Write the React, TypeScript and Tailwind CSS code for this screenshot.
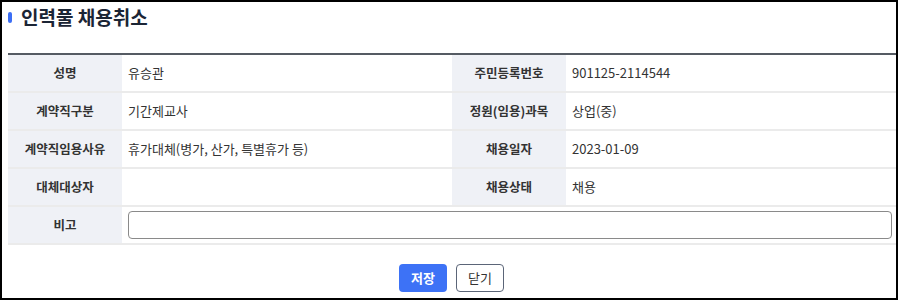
import React from "react";

const rows: { l1: string; v1: string; l2: string; v2: string }[] = [
  { l1: "성명", v1: "유승관", l2: "주민등록번호", v2: "901125-2114544" },
  { l1: "계약직구분", v1: "기간제교사", l2: "정원(임용)과목", v2: "상업(중)" },
  { l1: "계약직임용사유", v1: "휴가대체(병가, 산가, 특별휴가 등)", l2: "채용일자", v2: "2023-01-09" },
  { l1: "대체대상자", v1: "", l2: "채용상태", v2: "채용" },
];

function Label({ children }: { children: React.ReactNode }) {
  return (
    <div className="w-[114px] shrink-0 bg-[#eff1f6] flex items-center justify-center text-[12.5px] font-bold text-[#333]">
      {children}
    </div>
  );
}

function Value({ children }: { children: React.ReactNode }) {
  return (
    <div className="flex-1 flex items-center pl-[6px] text-[13px] text-[#333]">
      {children}
    </div>
  );
}

export default function App() {
  return (
    <div
      className="w-[898px] h-[300px] border-2 border-black bg-white flex flex-col"
      style={{ fontFamily: '"Noto Sans CJK KR", "Noto Sans", sans-serif' }}
    >
      <div className="h-[51px] flex items-start pl-[6px]">
        <div className="flex items-center gap-[9px] h-[30px]">
          <span className="w-[4px] h-[11px] rounded-full bg-[#3b6ef5]" />
          <h1 className="text-[19px] font-bold text-[#1b2535] leading-[28px]">인력풀 채용취소</h1>
        </div>
      </div>

      <div className="ml-[6px] border-t-2 border-[#555b63]">
        {rows.map((r, i) => (
          <div key={i} className="flex h-[38px] border-b-2 border-[#ebebeb]">
            <Label>{r.l1}</Label>
            <Value>{r.v1}</Value>
            <Label>{r.l2}</Label>
            <Value>{r.v2}</Value>
          </div>
        ))}
        <div className="flex h-[38px] border-b-2 border-[#ebebeb]">
          <Label>비고</Label>
          <div className="flex-1 flex items-center pl-[6px] pr-[4px]">
            <input
              type="text"
              className="w-full h-[28px] border border-[#8a8a8a] rounded-[4px] px-2 text-[13px] outline-none"
            />
          </div>
        </div>
      </div>

      <div className="flex justify-center gap-[9px] mt-[19px] pl-[5px]">
        <button className="w-[48px] h-[28px] rounded-[4px] bg-[#3d72f6] text-white text-[13px] font-bold">
          저장
        </button>
        <button className="w-[48px] h-[28px] rounded-[4px] border border-[#5b6578] bg-white text-[#333] text-[13px]">
          닫기
        </button>
      </div>
    </div>
  );
}
